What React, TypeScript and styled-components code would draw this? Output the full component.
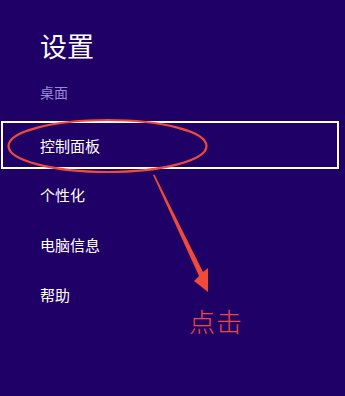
import React from 'react';
import styled, { createGlobalStyle } from 'styled-components';

const GlobalStyle = createGlobalStyle`
    html, body {
        margin: 0;
        padding: 0;
        background: #1f0066;
    }
`;

const Pane = styled.div`
    position: relative;
    width: 345px;
    height: 396px;
    overflow: hidden;
    background: #1f0066;
    font-family: "Noto Sans CJK SC", "Noto Sans", sans-serif;
    box-sizing: border-box;
    padding-top: 28px;
`;

const Title = styled.h1`
    margin: 0 0 0 40px;
    font-size: 27px;
    line-height: 36px;
    font-weight: 400;
    color: #ffffff;
`;

const Section = styled.div`
    margin: 18px 0 0 40px;
    font-size: 14px;
    line-height: 20px;
    color: #9a8ad8;
`;

const Menu = styled.ul`
    list-style: none;
    margin: 19px 0 0 0;
    padding: 0;
    display: flex;
    flex-direction: column;
`;

const MenuItem = styled.li<{ selected?: boolean }>`
    display: flex;
    align-items: center;
    box-sizing: border-box;
    padding-left: 37px;
    margin: 0 6px 0 1px;
    font-size: 15px;
    color: #ffffff;
    border: 2px solid ${p => (p.selected ? '#ffffff' : 'transparent')};
    height: ${p => (p.selected ? '48px' : '50px')};
`;

const Annotation = styled.svg`
    position: absolute;
    left: 0;
    top: 0;
    pointer-events: none;
`;

const ClickLabel = styled.div`
    position: absolute;
    left: 189px;
    top: 302px;
    font-size: 26px;
    font-weight: 300;
    letter-spacing: 1px;
    color: #ee4a3e;
`;

const items = ['控制面板', '个性化', '电脑信息', '帮助'];

export default function App() {
    return (
        <Pane>
            <GlobalStyle />
            <Title>设置</Title>
            <Section>桌面</Section>
            <Menu>
                {items.map((name, index) =>
                    <MenuItem key={name} selected={index === 0}>{name}</MenuItem>)}
            </Menu>

            <Annotation width="345" height="396" viewBox="0 0 345 396">
                <ellipse cx="107.5" cy="146" rx="99" ry="26"
                         fill="none" stroke="#ee4a3e" strokeWidth="2.2" />
                <polygon points="153,175 154.5,174.5 203,272 208,268 208,292 194,281 199,276"
                         fill="#f04a3a" />
            </Annotation>
            <ClickLabel>点击</ClickLabel>
        </Pane>
    );
}
